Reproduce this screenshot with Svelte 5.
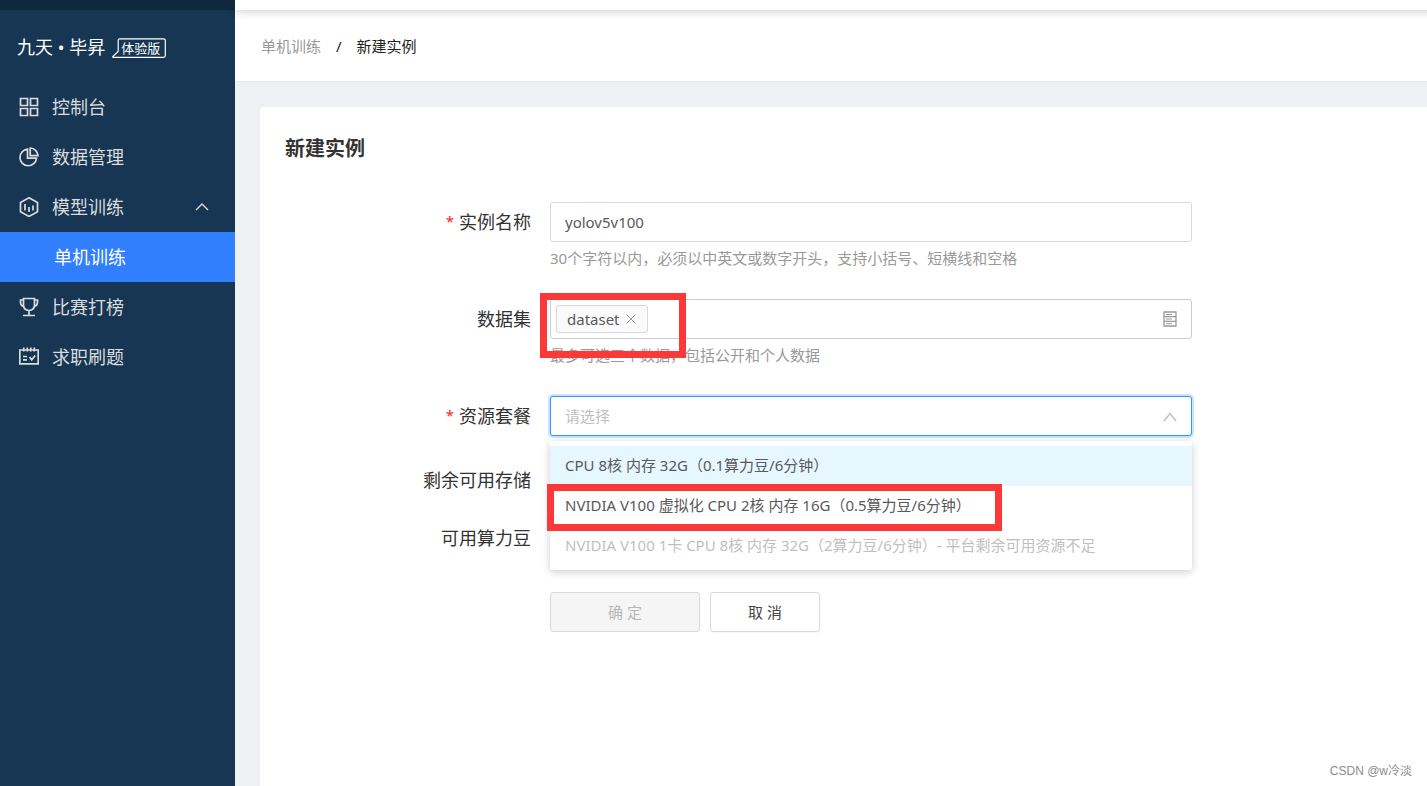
<script lang="ts">
  type Plan = { id: string; label: string; disabled?: boolean }

  const plans: Plan[] = [
    { id: 'cpu', label: 'CPU 8核 内存 32G（0.1算力豆/6分钟）' },
    { id: 'v100-virtual', label: 'NVIDIA V100 虚拟化 CPU 2核 内存 16G（0.5算力豆/6分钟）' },
    { id: 'v100', label: 'NVIDIA V100 1卡 CPU 8核 内存 32G（2算力豆/6分钟）- 平台剩余可用资源不足', disabled: true },
  ]

  let name = $state('yolov5v100')
  let datasets = $state(['dataset'])
  let plan = $state('')
  let open = $state(true)
  let menuOpen = $state(true)

  function removeDataset(item: string) {
    datasets = datasets.filter((d) => d !== item)
  }

  function choose(id: string) {
    plan = id
    open = false
  }

  function toggle(e: MouseEvent) {
    e.preventDefault()
    open = !open
  }
</script>

<div class="layout">
  <aside class="sidebar">
    <div class="brand">
      <span>九天 • 毕昇</span>
      <span class="badge">
        <svg width="54" height="20" viewBox="0 0 54 20" aria-hidden="true">
          <path d="M8 .8H51.500Q53.300.8 53.300 2.500V17.500Q53.300 19.300 51.500 19.300H1.300Q.3 19.300 1 18.300L6.200 13.500V2.500Q6.200.8 8 .8Z" />
        </svg>
        <span>体验版</span>
      </span>
    </div>
    <nav>
      <a href="#console">
        <svg class="icon" viewBox="0 0 20 20"><path d="M1.500 1.500h7v7h-7zM11.500 1.500h7v7h-7zM1.500 11.500h7v7h-7zM11.500 11.500h7v7h-7z" /></svg>
        <span>控制台</span>
      </a>
      <a href="#data">
        <svg class="icon" viewBox="0 0 20 20"><path d="M8.500 2.200a8.300 8.300 0 1 0 9 9H8.500zM11.200 1a8 8 0 0 1 7.800 7.600h-7.800z" /></svg>
        <span>数据管理</span>
      </a>
      <button class="group" aria-expanded={menuOpen} onclick={() => (menuOpen = !menuOpen)}>
        <svg class="icon" viewBox="0 0 20 20"><path d="M10 .8l8.500 4.600v9.400L10 19.400l-8.500-4.600V5.400zM6 7v6.500M10 10v5M14 8.500v5" /></svg>
        <span>模型训练</span>
        <svg class="arrow" class:closed={!menuOpen} viewBox="0 0 14 8"><path d="M1 7l6-6 6 6" /></svg>
      </button>
      {#if menuOpen}
        <a class="sub active" href="#single" aria-current="page">单机训练</a>
      {/if}
      <a href="#contest">
        <svg class="icon" viewBox="0 0 20 20"><path d="M4.500 1.500h11v6.500q0 5-5.500 5.500-5.500-.5-5.500-5.500zM4.500 3H1.500v2q0 4 3.500 4.500M15.500 3h3v2q0 4-3.500 4.500M10 13.500v5M4 18.500h12" /></svg>
        <span>比赛打榜</span>
      </a>
      <a href="#jobs">
        <svg class="icon" viewBox="0 0 20 20"><path d="M.8 3h18.400v13.800H.8zM4.800.5v4M8.300.5v4M11.800.5v4M15.300.5v4M4 9.500h4M4 12.800h4M10.500 10l2.200 2.800 3.500-4.300" /></svg>
        <span>求职刷题</span>
      </a>
    </nav>
  </aside>

  <main>
    <nav class="breadcrumb" aria-label="breadcrumb">
      <a href="#single">单机训练</a>
      <span>/</span>
      <span>新建实例</span>
    </nav>

    <section class="card">
      <h1>新建实例</h1>
      <form onsubmit={(e) => e.preventDefault()}>
        <div class="row">
          <label class="required" for="name">实例名称</label>
          <div>
            <input id="name" class="control" type="text" maxlength="30" bind:value={name} />
            <p class="help">30个字符以内，必须以中英文或数字开头，支持小括号、短横线和空格</p>
          </div>
        </div>

        <div class="row">
          <span class="label" id="dataset-label">数据集</span>
          <div class="field">
            <div class="control tags" role="group" aria-labelledby="dataset-label">
              {#each datasets as item}
                <span class="tag">
                  {item}
                  <button type="button" aria-label="移除" onclick={() => removeDataset(item)}>
                    <svg viewBox="0 0 10 10"><path d="M.5.500l9 9M9.500.500l-9 9" /></svg>
                  </button>
                </span>
              {/each}
              <button class="picker" type="button" aria-label="选择数据集">
                <svg viewBox="0 0 14 16"><path d="M1 1h12v14H1zM1 5.700h12M1 10.300h12" /><path class="thin" d="M3 3.500h6M3 8h6M3 12.700h6" /></svg>
              </button>
            </div>
            <p class="help">最多可选三个数据，包括公开和个人数据</p>
            <div class="mark mark-dataset"></div>
          </div>
        </div>

        <div class="row">
          <label class="required" for="plan">资源套餐</label>
          <div class="field">
            <select id="plan" class="control" class:open class:empty={!plan} bind:value={plan} onmousedown={toggle}>
              <option value="" disabled hidden>请选择</option>
              {#each plans as p}
                <option value={p.id} disabled={p.disabled}>{p.label}</option>
              {/each}
            </select>
            <svg class="caret" class:closed={!open} viewBox="0 0 14 10"><path d="M1 9l6-7.500L13 9" /></svg>
            {#if open}
              <div class="dropdown">
                {#each plans as p, i}
                  <button type="button" class:hover={i === 0} disabled={p.disabled} onclick={() => choose(p.id)}>{p.label}</button>
                {/each}
                <div class="mark mark-plan"></div>
              </div>
            {/if}
          </div>
        </div>

        <div class="row info"><span class="label">剩余可用存储</span></div>
        <div class="row info"><span class="label">可用算力豆</span></div>

        <div class="row actions">
          <div class="buttons">
            <button class="submit" type="submit" disabled={!plan}>确 定</button>
            <button class="cancel" type="button">取 消</button>
          </div>
        </div>
      </form>
    </section>
  </main>
  <div class="topbar"></div>
  <div class="watermark">CSDN @w冷淡</div>
</div>

<style>
  :global(body) {
    margin: 0;
  }
  .layout {
    position: relative;
    display: flex;
    min-height: 100vh;
    overflow: hidden;
    background: #eff0f4;
    color: #333;
    font-family: 'Noto Sans', 'Noto Sans CJK SC', sans-serif;
    font-size: 15px;
  }
  .layout * {
    box-sizing: border-box;
  }
  button,
  input,
  select {
    font: inherit;
    color: inherit;
  }
  button {
    cursor: pointer;
  }
  a {
    color: inherit;
    text-decoration: none;
  }
  svg {
    fill: none;
    stroke: currentColor;
    display: block;
  }

  .topbar {
    position: absolute;
    top: 0;
    left: 0;
    right: 0;
    height: 10px;
    background: linear-gradient(to right, #10283e 235px, #fff 235px);
    box-shadow: 235px 2px 8px rgba(0, 0, 0, 0.18);
  }

  .sidebar {
    flex: 0 0 235px;
    padding-top: 10px;
    background: #163654;
    color: #dcdcdc;
    font-size: 18px;
  }
  .brand {
    display: flex;
    align-items: center;
    gap: 7px;
    height: 72px;
    padding-left: 17px;
    color: #fff;
  }
  .badge {
    position: relative;
    width: 54px;
    height: 20px;
    margin-top: 4px;
    padding-left: 9px;
    font-size: 13px;
    line-height: 20px;
  }
  .badge svg {
    position: absolute;
    inset: 0;
    stroke-width: 1.2;
  }
  .sidebar nav a,
  .group {
    display: flex;
    align-items: center;
    gap: 13px;
    width: 100%;
    height: 50px;
    padding: 0 26px 0 19px;
    border: 0;
    background: none;
    line-height: 24px;
  }
  .icon {
    width: 20px;
    height: 20px;
    stroke-width: 1.7;
  }
  .arrow {
    width: 14px;
    height: 8px;
    margin-left: auto;
    stroke-width: 1.4;
  }
  .closed {
    transform: rotate(180deg);
  }
  .sidebar nav .sub {
    padding-left: 54px;
  }
  .sidebar nav .active {
    background: #317eff;
    color: #fff;
  }

  main {
    flex: 1;
    min-width: 0;
    display: flex;
    flex-direction: column;
  }
  .breadcrumb {
    display: flex;
    align-items: center;
    gap: 15px;
    height: 82px;
    padding: 10px 26px 0;
    border-bottom: 1px solid #e8e9ec;
    background: #fff;
    color: #222;
  }
  .breadcrumb a {
    color: #999;
  }
  .card {
    flex: 1;
    margin: 25px 0 0 25px;
    padding: 25px;
    border-radius: 4px 0 0 0;
    background: #fff;
  }
  h1 {
    margin: 0 0 36px;
    font-size: 20px;
    line-height: 34px;
    font-weight: 700;
    color: #333;
  }

  .row {
    display: grid;
    grid-template-columns: 246px minmax(0, 642px);
    column-gap: 19px;
    margin-bottom: 24px;
  }
  label,
  .label {
    height: 40px;
    font-size: 18px;
    line-height: 40px;
    text-align: right;
  }
  .required::before {
    content: '*';
    margin-right: 5px;
    color: #f5222d;
    font-size: 15px;
    line-height: 1;
    vertical-align: 2px;
  }
  .field {
    position: relative;
  }
  .control {
    display: block;
    width: 100%;
    height: 40px;
    padding: 0 14px;
    border: 1px solid #d9d9d9;
    border-radius: 3px;
    outline: 0;
    background: #fff;
    color: #595959;
  }
  .tags {
    display: flex;
    align-items: center;
    gap: 4px;
    padding: 0 14px 0 5px;
    border-color: #ccc;
  }
  .tag {
    display: flex;
    align-items: center;
    gap: 6px;
    height: 28px;
    padding: 0 11px 0 10px;
    border: 1px solid #d9d9d9;
    border-radius: 3px;
    background: #fafafa;
  }
  .tag button,
  .picker {
    padding: 0;
    border: 0;
    background: none;
    color: #999;
  }
  .tag svg {
    width: 10px;
    height: 10px;
  }
  .picker {
    margin-left: auto;
  }
  .picker svg {
    width: 14px;
    height: 16px;
    stroke-width: 1.3;
  }
  .thin {
    stroke-width: 1;
  }
  .help {
    margin: 0;
    line-height: 33px;
    color: #999;
  }
  select {
    appearance: none;
  }
  select.open {
    border-color: #2f97f7;
    box-shadow: 0 0 0 2px #cbe5ff;
  }
  select.empty {
    color: #bfbfbf;
  }
  .caret {
    position: absolute;
    top: 16px;
    right: 15px;
    width: 14px;
    height: 10px;
    color: #bbb;
    stroke-width: 1.3;
    pointer-events: none;
  }
  .dropdown {
    position: absolute;
    z-index: 1;
    top: 45px;
    left: 0;
    right: 0;
    padding: 5px 0 4px;
    border-radius: 3px;
    background: #fff;
    box-shadow: 0 2px 9px rgba(0, 0, 0, 0.2);
  }
  .dropdown button {
    display: block;
    width: 100%;
    height: 40px;
    padding: 0 15px 3px;
    border: 0;
    background: none;
    color: #595959;
    text-align: left;
    white-space: nowrap;
  }
  .dropdown .hover {
    background: #e6f7ff;
  }
  .dropdown button:disabled {
    color: #bfbfbf;
  }
  .mark {
    position: absolute;
    border: 7px solid #fc3838;
    pointer-events: none;
  }
  .mark-dataset {
    top: -6px;
    left: -10px;
    width: 146px;
    height: 65px;
  }
  .mark-plan {
    top: 43px;
    left: -3px;
    width: 455px;
    height: 47px;
  }

  .info {
    margin-bottom: 18px;
  }
  .actions {
    margin: 34px 0 0;
  }
  .buttons {
    grid-column: 2;
    display: flex;
    gap: 10px;
  }
  .buttons button {
    height: 40px;
    padding: 0 0 2px;
    border: 1px solid #d9d9d9;
    border-radius: 3px;
    background: #fff;
    color: #444;
  }
  .buttons .submit {
    width: 150px;
  }
  .buttons .submit:disabled {
    background: #f5f5f5;
    color: #b8b8b8;
  }
  .buttons .cancel {
    width: 110px;
    box-shadow: 0 1px 1px rgba(0, 0, 0, 0.03);
  }
  .watermark {
    position: absolute;
    right: 15px;
    bottom: 8px;
    font-family: 'Liberation Sans', 'Noto Sans CJK SC', sans-serif;
    font-size: 12px;
    color: #8c8c8c;
  }
</style>
